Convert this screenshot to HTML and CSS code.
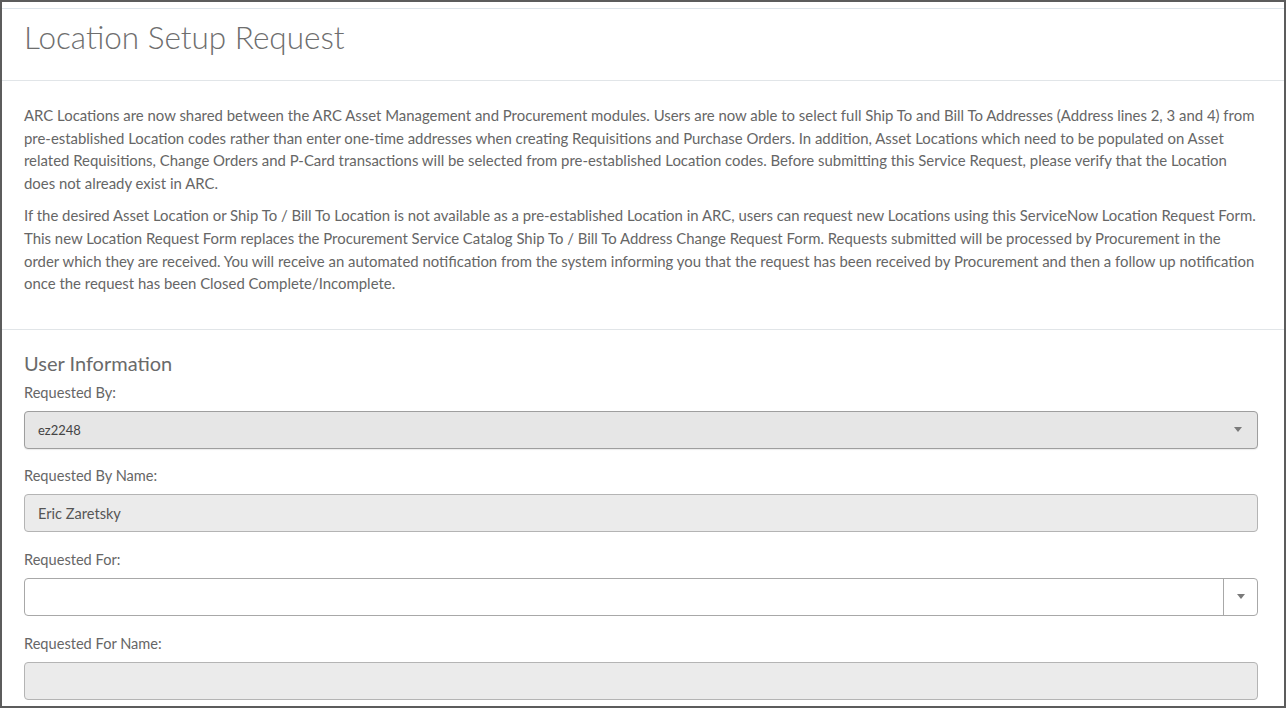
FILE: index.html
```html
<!DOCTYPE html>
<html lang="en">
<head>
<meta charset="utf-8">
<title>Location Setup Request</title>
<link rel="stylesheet" href="styles.css">
</head>
<body>
<div class="frame">
  <div class="panel">
    <div class="panel-header">
      <h1 class="title">Location Setup Request</h1>
    </div>
    <div class="panel-intro">
      <p>ARC Locations are now shared between the ARC Asset Management and Procurement modules. Users are now able to select full Ship To and Bill To Addresses (Address lines 2, 3 and 4) from pre-established Location codes rather than enter one-time addresses when creating Requisitions and Purchase Orders. In addition, Asset Locations which need to be populated on Asset related Requisitions, Change Orders and P-Card transactions will be selected from pre-established Location codes. Before submitting this Service Request, please verify that the Location does not already exist in ARC.</p>
      <p>If the desired Asset Location or Ship To / Bill To Location is not available as a pre-established Location in ARC, users can request new Locations using this ServiceNow Location Request Form. This new Location Request Form replaces the Procurement Service Catalog Ship To / Bill To Address Change Request Form. Requests submitted will be processed by Procurement in the order which they are received. You will receive an automated notification from the system informing you that the request has been received by Procurement and then a follow up notification once the request has been Closed Complete/Incomplete.</p>
    </div>
    <div class="section">
      <h2 class="section-title">User Information</h2>
      <div class="form-group">
        <div class="label">Requested By:</div>
        <div class="control select disabled">
          <span class="value small">ez2248</span>
          <span class="caret"></span>
        </div>
      </div>
      <div class="form-group">
        <div class="label">Requested By Name:</div>
        <div class="control disabled">
          <span class="value">Eric Zaretsky</span>
        </div>
      </div>
      <div class="form-group">
        <div class="label">Requested For:</div>
        <div class="control lookup">
          <span class="value"></span>
          <span class="addon"><span class="caret"></span></span>
        </div>
      </div>
      <div class="form-group">
        <div class="label">Requested For Name:</div>
        <div class="control disabled">
          <span class="value"></span>
        </div>
      </div>
    </div>
  </div>
</div>
</body>
</html>
```

FILE: styles.css
```css
html, body {
  margin: 0;
  padding: 0;
  background: #ffffff;
}

body {
  font-family: Lato, "Open Sans", "Liberation Sans", sans-serif;
  color: #666666;
}

.frame {
  width: 1286px;
  height: 708px;
  box-sizing: border-box;
  border: 2px solid #5c5c5c;
  overflow: hidden;
  background: #ffffff;
}

.panel {
  margin-top: 6px;
  border-top: 1px solid #dde4ea;
}

.panel-header {
  height: 72px;
  box-sizing: border-box;
  padding: 9px 22px 0;
  border-bottom: 1px solid #e1e5e8;
}

.title {
  margin: 0;
  font-size: 31.5px;
  font-weight: 300;
  line-height: 38px;
  color: #6e6e6e;
}

.panel-intro {
  padding: 23px 26px 24px 22px;
  border-bottom: 1px solid #e1e5e8;
}

.panel-intro p {
  margin: 0 0 10px;
  font-size: 14.92px;
  line-height: 22.6px;
  color: #666666;
}

.section {
  padding: 21px 26px 0 22px;
}

.section-title {
  margin: 0 0 7px;
  font-size: 20px;
  font-weight: 400;
  line-height: 24px;
  color: #6a6a6a;
}

.form-group {
  margin-bottom: 16.6px;
}

.label {
  font-size: 14.6px;
  line-height: 22px;
  margin-bottom: 7px;
  color: #666666;
}

.control {
  height: 38px;
  box-sizing: border-box;
  border: 1px solid #a8a8a8;
  border-radius: 4px;
  display: flex;
  align-items: center;
  background: #ffffff;
}

.control.disabled {
  background: #ebebeb;
  border-color: #b4b4b4;
}

.control.select.disabled {
  background: #e6e6e6;
  border-color: #9e9e9e;
  box-shadow: 0 1px 1px rgba(0,0,0,0.08);
}

.value {
  flex: 1;
  padding-left: 13px;
  font-size: 14.6px;
  color: #555555;
}

.value.small {
  font-size: 13px;
  color: #444444;
}

.caret {
  width: 0;
  height: 0;
  border-left: 4px solid transparent;
  border-right: 4px solid transparent;
  border-top: 5px solid #7a7a7a;
  margin-right: 15px;
}

.lookup .addon {
  width: 33px;
  height: 100%;
  border-left: 1px solid #a8a8a8;
  display: flex;
  align-items: center;
  justify-content: center;
}

.lookup .addon .caret {
  margin-right: 0;
}
```
